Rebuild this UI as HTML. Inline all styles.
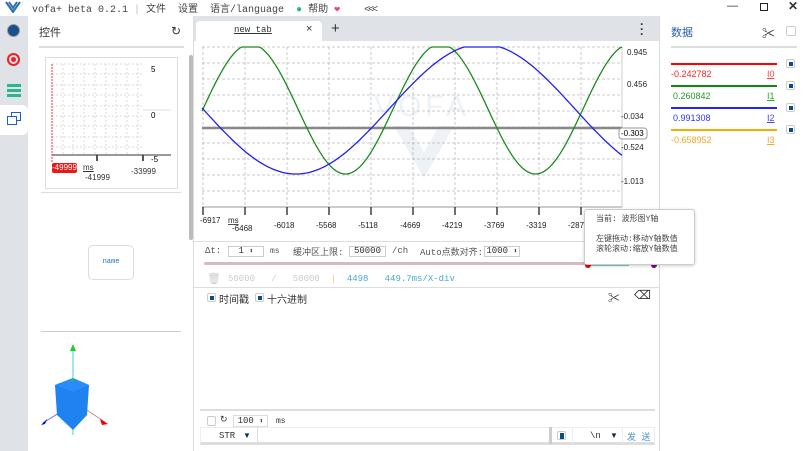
<!DOCTYPE html><html><head><meta charset="utf-8"><style>
*{margin:0;padding:0;box-sizing:border-box}
body{width:805px;height:451px;overflow:hidden;background:#fff;font-family:"Liberation Mono","Noto Sans CJK SC",monospace;font-size:10px;color:#333;position:relative}
.a{position:absolute}
.s{font-family:"Liberation Sans","Noto Sans CJK SC",sans-serif}
.cb{position:absolute;width:9px;height:9px;border:1px solid #ccc;border-radius:2px;background:#fff}
.cb i{position:absolute;left:2px;top:2px;width:4px;height:4px;background:#0d4a8a}
</style></head><body>
<div class="a" style="left:0;top:0;width:805px;height:16px;background:#fff"></div>
<svg class="a" style="left:5px;top:1px" width="16" height="12"><path d="M1 1 L8 11 L15 1 M4 1 L8 7 L12 1" stroke="#2a6fb0" stroke-width="2" fill="none"/></svg>
<div class="a" style="left:32px;top:0;font-size:10px;color:#444;white-space:pre">vofa+ beta 0.2.1 <span style="color:#bbb">|</span> 文件  设置  语言/language  <span style="color:#2cb58f">●</span> 帮助 <span style="color:#e8467c">❤</span>    <span style="letter-spacing:-2px">&lt;&lt;&lt;</span></div>
<div class="a s" style="left:727px;top:0;font-size:11px">—</div>
<div class="a" style="left:760px;top:3px;width:8px;height:8px;border:1.5px solid #222"></div>
<div class="a s" style="left:788px;top:-1px;font-size:12px;font-weight:bold">✕</div>
<div class="a" style="left:0;top:16px;width:28px;height:435px;background:#dfe2e6"></div>
<div class="a" style="left:0;top:105px;width:28px;height:30px;background:#fff;border-radius:0 6px 6px 0"></div>
<div class="a" style="left:7px;top:24px;width:13px;height:13px;border-radius:50%;background:#1b4f8e;border:1px solid #999"></div>
<div class="a" style="left:7px;top:53px;width:13px;height:13px;border-radius:50%;border:2px solid #e8232a"></div>
<div class="a" style="left:11px;top:57px;width:5px;height:5px;border-radius:50%;background:#e8232a"></div>
<div class="a" style="left:7px;top:84px;width:14px;height:3px;background:#2cb58f;box-shadow:0 5px 0 #2cb58f,0 10px 0 #2cb58f"></div>
<div class="a" style="left:11px;top:112px;width:10px;height:9px;border:1.5px solid #1d5fd0"></div>
<div class="a" style="left:7px;top:116px;width:10px;height:9px;border:1.5px solid #1d5fd0;background:#fff"></div>
<div class="a" style="left:39px;top:24px;font-size:11px">控件</div>
<div class="a s" style="left:171px;top:24px;font-size:12px">↻</div>
<div class="a" style="left:39px;top:46px;width:145px;height:2px;background:#ddd"></div>
<div class="a" style="left:45px;top:57px;width:133px;height:132px;border:1px solid #ddd"></div>
<svg class="a" style="left:46px;top:58px" width="132" height="130">
<g stroke="#ccc" stroke-dasharray="2,2" stroke-width="0.7">
<path d="M6 6H97M6 16H97M6 27H97M6 37H97M6 48H97M6 58H97M6 68H97M6 79H97M6 89H97M17 6V97M27 6V97M38 6V97M49 6V97M60 6V97M70 6V97M81 6V97M92 6V97"/></g>
<path d="M6 97H125" stroke="#333"/><path d="M97 52H125" stroke="#ddd"/>
<path d="M6 6V105" stroke="#f33" stroke-dasharray="2,1"/>
<path d="M51 97V103M97 97V103" stroke="#222" stroke-width="1.5"/>
<text x="105" y="14" font-size="8" font-family="Liberation Sans">5</text>
<text x="105" y="60" font-size="8" font-family="Liberation Sans">0</text>
<text x="105" y="104" font-size="8" font-family="Liberation Sans">-5</text>
</svg>
<div class="a s" style="left:52px;top:163px;width:25px;height:10px;background:#e81818;color:#fff;font-size:8px;line-height:10px;border-radius:2px">-49999</div>
<div class="a s" style="left:83px;top:163px;font-size:8px;text-decoration:underline">ms</div>
<div class="a s" style="left:85px;top:173px;font-size:8px">-41999</div>
<div class="a s" style="left:131px;top:167px;font-size:8px">-33999</div>
<div class="a" style="left:41px;top:192px;width:140px;height:1px;background:#ddd"></div>
<div class="a" style="left:88px;top:245px;width:46px;height:35px;border:1px solid #ddd;border-radius:5px;color:#2a6fb0;font-size:7px;text-align:center;line-height:33px">name</div>
<div class="a" style="left:41px;top:331px;width:140px;height:1px;background:#ccc"></div>
<svg class="a" style="left:40px;top:340px" width="110" height="100">
<path d="M3 83L22 71" stroke="#66f"/><path d="M33 5V95" stroke="#4cd"/><path d="M42 67L65 82" stroke="#c88"/>
<polygon points="33,4 30,11 36,11" fill="#2c2"/><polygon points="1,85 7,79 5,84" fill="#00f"/><polygon points="68,84 60,79 62,85" fill="#e00"/>
<polygon points="15,45 33,38 49,45 47,75 33,90 17,75" fill="#1e82f0"/>
<polygon points="15,45 33,38 49,45 33,52" fill="#2a8cfa"/>
<circle cx="33" cy="40" r="1.5" fill="#2c2"/>
</svg>
<div class="a" style="left:189px;top:55px;width:4px;height:185px;background:#bbb;border-radius:2px"></div>
<div class="a" style="left:193px;top:16px;width:1px;height:435px;background:#ddd"></div>
<div class="a" style="left:194px;top:16px;width:466px;height:25px;background:#dfe2e6"></div>
<div class="a" style="left:196px;top:21px;width:126px;height:20px;background:#fff;border-radius:4px 4px 0 0"></div>
<div class="a" style="left:234px;top:25px;font-size:9px;text-decoration:underline">new tab</div>
<div class="a s" style="left:306px;top:23px;font-size:11px">×</div>
<div class="a s" style="left:331px;top:20px;font-size:15px">+</div>
<div class="a s" style="left:640px;top:22px;font-size:12px;font-weight:bold;line-height:5px">·<br>·<br>·</div>
<div class="a" style="left:659px;top:16px;width:1px;height:435px;background:#ddd"></div>
<svg class="a" style="left:194px;top:41px" width="466" height="200">
<g stroke="#bbb" stroke-dasharray="3,2" stroke-width="0.8">
<path d="M8 6H428M8 22H428M8 38H428M8 54H428M8 70H428M8 86H428M8 102H428M8 118H428M8 134H428M8 150H428M8 166H428"/>
<path d="M9 6V166M51 6V166M93 6V166M135 6V166M177 6V166M219 6V166M261 6V166M303 6V166M345 6V166M387 6V166"/>
</g>
<path d="M428 6V166" stroke="#ccc"/>
<path d="M8 166H428" stroke="#999"/>
<g transform="translate(180,45)" opacity="0.15"><text x="0" y="30" font-size="30" fill="#8ac" font-family="Liberation Sans" letter-spacing="4">VOFA</text><path d="M20 40L50 92L80 40L65 40L50 66L35 40Z" fill="#8ac"/></g>
<path d="M8 87H428" stroke="#888" stroke-width="2.5"/>
<path id="g" fill="none" stroke="#1e8a1e" stroke-width="1.3" d=""/>
<path id="b" fill="none" stroke="#2020ee" stroke-width="1.3" d=""/>
<g fill="#222" font-family="Liberation Sans" font-size="8">
<text x="433" y="14">0.945</text><text x="433" y="46">0.456</text><text x="427" y="78">-0.034</text><text x="427" y="109">-0.524</text><text x="427" y="143">-1.013</text>
</g>
<rect x="425" y="87" width="28" height="11" rx="3" fill="#fff" stroke="#999"/><text x="427" y="95" font-size="8" font-family="Liberation Sans">-0.303</text>
<g stroke="#222" stroke-width="1.3" id="tk"></g>
<g font-family="Liberation Sans" font-size="8" fill="#222">
<text x="6" y="182">-6917</text><text x="34" y="182" text-decoration="underline">ms</text><text x="38" y="190">-6468</text>
<text x="80" y="187">-6018</text><text x="122" y="187">-5568</text><text x="164" y="187">-5118</text><text x="206" y="187">-4669</text><text x="248" y="187">-4219</text><text x="290" y="187">-3769</text><text x="332" y="187">-3319</text><text x="374" y="187">-287</text>
</g>
</svg>
<div class="a" style="left:194px;top:241px;width:466px;height:1px;background:#ddd"></div>
<div class="a" style="left:205px;top:246px;font-size:9px;white-space:pre;color:#555">Δt:</div>
<div class="a" style="left:228px;top:246px;width:36px;height:11px;border:1px solid #ccc;font-size:9px;text-align:center;line-height:9px">1 <span style="font-size:7px;color:#335">⬍</span></div>
<div class="a" style="left:270px;top:247px;font-size:8px;color:#555">ms</div>
<div class="a" style="left:293px;top:245px;font-size:9px;color:#555">缓冲区上限:</div>
<div class="a" style="left:349px;top:246px;width:37px;height:11px;border:1px solid #ccc;font-size:9px;text-align:center;line-height:9px">50000</div>
<div class="a" style="left:392px;top:246px;font-size:9px;color:#555">/ch</div>
<div class="a" style="left:420px;top:245px;font-size:9px;color:#555">Auto点数对齐:</div>
<div class="a" style="left:484px;top:246px;width:36px;height:11px;border:1px solid #ccc;font-size:9px;text-align:center;line-height:9px">1000 <span style="font-size:7px;color:#335">⬍</span></div>
<div class="a" style="left:204px;top:262px;width:385px;height:3px;background:#d8b8c4;border-radius:2px"></div>
<div class="a" style="left:589px;top:263px;width:40px;height:3px;background:#7cc"></div>
<div class="a" style="left:585px;top:262px;width:6px;height:6px;border-radius:50%;background:#e00"></div>
<div class="a" style="left:651px;top:262px;width:6px;height:6px;border-radius:50%;background:#808"></div>
<div class="a s" style="left:207px;top:272px;font-size:11px;color:#ccc">🗑</div>
<div class="a" style="left:228px;top:274px;font-size:9px;color:#ccc;white-space:pre">50000   /   50000  <span style="color:#f4c57c">|</span>  <span style="color:#4aa8c8">4498   449.7ms/X-div</span></div>
<div class="a" style="left:194px;top:287px;width:466px;height:1px;background:#ddd"></div>
<div class="cb" style="left:207px;top:293px"><i></i></div>
<div class="a" style="left:219px;top:291px;font-size:10px">时间戳</div>
<div class="cb" style="left:255px;top:293px"><i></i></div>
<div class="a" style="left:267px;top:291px;font-size:10px">十六进制</div>
<div class="a s" style="left:608px;top:289px;font-size:12px">✂</div>
<div class="a s" style="left:634px;top:288px;font-size:12px">⌫</div>
<div class="a" style="left:584px;top:209px;width:111px;height:56px;background:#fff;border:1px solid #ccc;border-radius:3px;box-shadow:0 1px 3px rgba(0,0,0,.2);font-size:8px;color:#444;padding:5px 0 0 11px;line-height:10px">当前: 波形图Y轴<br><br>左键拖动:移动Y轴数值<br>滚轮滚动:缩放Y轴数值</div>
<div class="a" style="left:200px;top:409px;width:455px;height:2px;background:#ddd"></div>
<div class="cb" style="left:207px;top:416px;width:9px;height:10px;border-color:#ccc"></div>
<div class="a s" style="left:220px;top:414px;font-size:9px">↻</div>
<div class="a" style="left:233px;top:415px;width:35px;height:12px;border:1px solid #ddd;font-size:9px;text-align:center;line-height:10px">100 <span style="font-size:7px">⬍</span></div>
<div class="a" style="left:276px;top:417px;font-size:8px">ms</div>
<div class="a" style="left:200px;top:427px;width:455px;height:18px;border:1px solid #eee;border-bottom:3px solid #ddd"></div>
<div class="a" style="left:219px;top:431px;font-size:9px">STR</div>
<div class="a s" style="left:243px;top:431px;font-size:8px;color:#134">▼</div>
<div class="a" style="left:257px;top:427px;width:1px;height:17px;background:#ddd"></div>
<div class="a" style="left:549px;top:427px;width:3px;height:17px;background:#ccc"></div>
<div class="cb" style="left:557px;top:431px"><i style="width:4px;height:6px;top:1px"></i></div>
<div class="a" style="left:572px;top:427px;width:1px;height:17px;background:#eee"></div>
<div class="a" style="left:590px;top:431px;font-size:9px">\n</div>
<div class="a s" style="left:610px;top:431px;font-size:8px;color:#134">▼</div>
<div class="a" style="left:622px;top:427px;width:1px;height:17px;background:#eee"></div>
<div class="a" style="left:627px;top:430px;font-size:9px;color:#4a90c8">发 送</div>
<div class="a" style="left:671px;top:24px;font-size:11px;color:#2a5fa8">数据</div>
<div class="a s" style="left:762px;top:23px;font-size:13px">✂</div>
<div class="a" style="left:786px;top:26px;width:10px;height:10px;border:1px solid #ccc;border-radius:2px"></div>
<div class="a" style="left:671px;top:46px;width:126px;height:2px;background:#ddd"></div>
<div class="a" style="left:671px;top:63px;width:106px;height:2px;background:#f00"></div>
<div class="a s" style="left:671px;top:69px;font-size:9px;color:#f22">-0.242782</div><div class="a s" style="left:767px;top:69px;font-size:9px;color:#f44;text-decoration:underline">I0</div>
<div class="a" style="left:671px;top:85px;width:106px;height:2px;background:#118811"></div>
<div class="a s" style="left:673px;top:91px;font-size:9px;color:#229922">0.260842</div><div class="a s" style="left:767px;top:91px;font-size:9px;color:#2a2;text-decoration:underline">I1</div>
<div class="a" style="left:671px;top:107px;width:106px;height:2px;background:#22f"></div>
<div class="a s" style="left:673px;top:113px;font-size:9px;color:#33e">0.991308</div><div class="a s" style="left:767px;top:113px;font-size:9px;color:#44f;text-decoration:underline">I2</div>
<div class="a" style="left:671px;top:129px;width:106px;height:2px;background:#fa0"></div>
<div class="a s" style="left:671px;top:135px;font-size:9px;color:#f5a623">-0.658952</div><div class="a s" style="left:767px;top:135px;font-size:9px;color:#f5a623;text-decoration:underline">I3</div>
<div class="cb" style="left:786px;top:59px"><i></i></div>
<div class="cb" style="left:786px;top:81px"><i></i></div>
<div class="cb" style="left:786px;top:103px"><i></i></div>
<div class="cb" style="left:786px;top:125px"><i></i></div>
<script>
function mk(f){var d="";for(var x=8;x<=428;x+=2){var y=f(x);y=Math.max(6,Math.min(166,y));d+=(x==8?"M":"L")+x+" "+y.toFixed(1);}return d;}
document.getElementById("g").setAttribute("d",mk(function(x){return 68-65*Math.sin(2*Math.PI*(x-9)/190);}));
document.getElementById("b").setAttribute("d",mk(function(x){return 68+65*Math.sin(2*Math.PI*(x-9)/372);}));
var t="";for(var i=0;i<10;i++){var x=9+42*i;t+="M"+x+" 166V174";}
document.getElementById("tk").innerHTML='<path d="'+t+'"/>';
</script>
</body></html>
